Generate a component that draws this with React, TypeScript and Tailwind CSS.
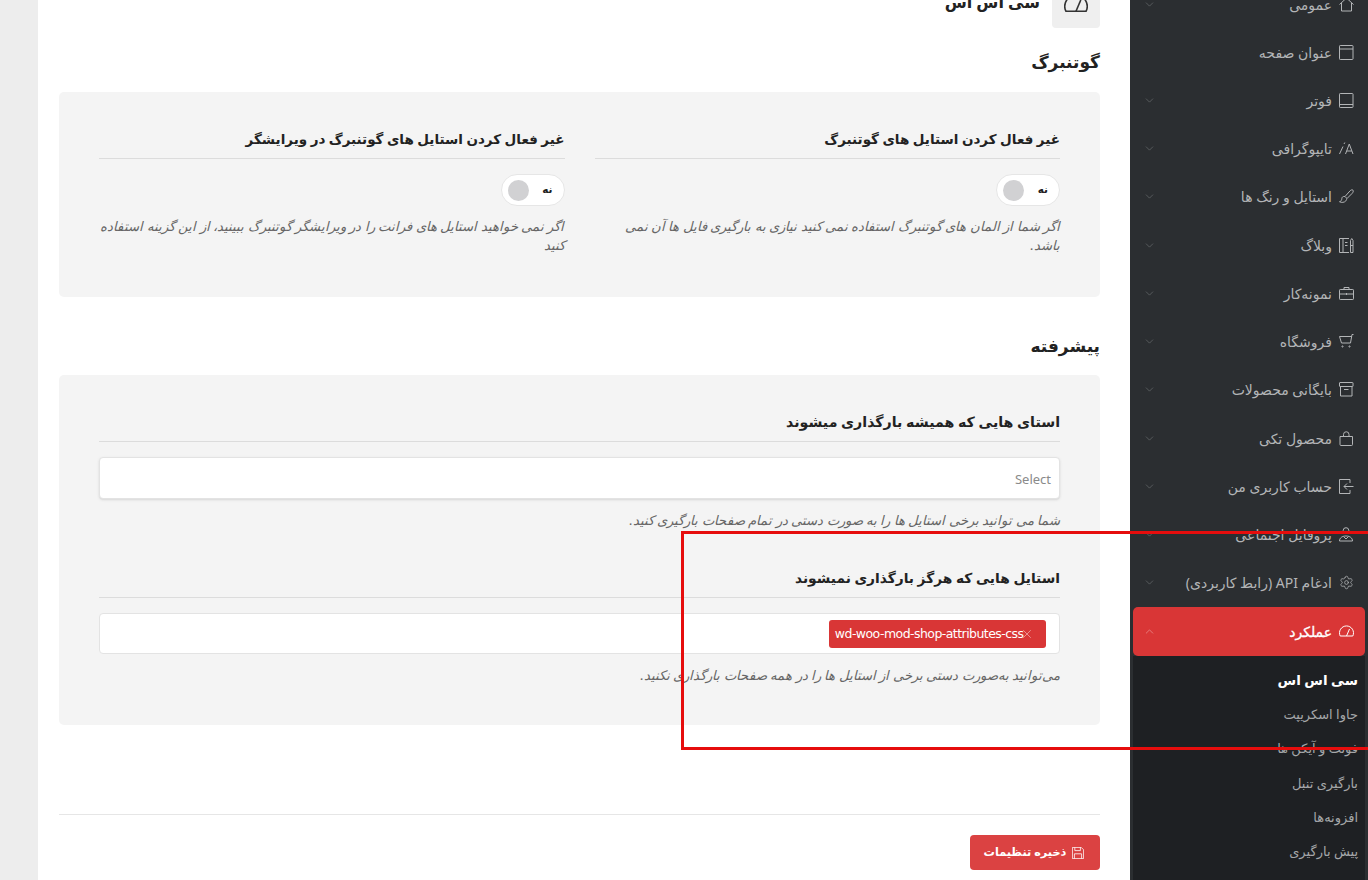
import React from 'react';
import { ChevronDown, ChevronUp, Settings, X } from 'lucide-react';

const Icon: React.FC<{ className?: string; children: React.ReactNode }> = ({ className = 'w-[15px] h-[15px] shrink-0', children }) => (
  <svg viewBox="0 0 15 15" fill="none" stroke="currentColor" strokeWidth="1" className={className}>
    {children}
  </svg>
);

const Gauge: React.FC<{ className?: string }> = ({ className }) => (
  <Icon className={className}>
    <path d="M1.2 12A7 7 0 1 1 13.8 12Z" />
    <path d="M7.5 12 10.5 5" />
  </Icon>
);

const menu = [
  { label: 'عمومی', arrow: true, icon: <Icon><path d="M.5 7.5 7.5 1l7 6.5" /><path d="M2.5 6v8h10V6" /></Icon> },
  { label: 'عنوان صفحه', arrow: false, icon: <Icon><rect x=".5" y=".5" width="13.5" height="14" rx=".7" /><path d="M.5 4h13.5" /></Icon> },
  { label: 'فوتر', arrow: true, icon: <Icon><rect x=".5" y=".5" width="13.5" height="14" rx=".7" /><path d="M.5 11.5h13.5" /></Icon> },
  { label: 'تایپوگرافی', arrow: true, icon: <Icon><path d="M.5 13 4 5.5M5 3l.8-1.5" /><path d="M6.5 13l3.75-10 3.75 10M7.8 10h5" /></Icon> },
  { label: 'استایل و رنگ ها', arrow: true, icon: <Icon><path d="M14 1.2c-1-.8-2-.3-3 .7L6 7.5l2 2 5-5c1-1 1.7-2.3 1-3.300z" /><path d="M6 7.500c-2-.5-3.200.8-3.200 2.200 0 1.500-.8 2.600-2.300 3 2 1.200 5 .8 6.300-.8.9-1.100 1-2 .7-2.400" /></Icon> },
  { label: 'وبلاگ', arrow: true, icon: <Icon><path d="M10 .5H.5v14H10" /><path d="M4 .5v14M6 4.500h2.500M6 7.500h2.500" /><path d="M11.500 5V2.500l1.250-2 1.250 2v12h-2.500z" /><path d="M11.500 7.500H14" /></Icon> },
  { label: 'نمونه‌کار', arrow: true, icon: <Icon><rect x=".5" y="3.500" width="14" height="10" rx=".7" /><path d="M5 3.500v-2h5v2M.5 8h14M7.500 7v2" /></Icon> },
  { label: 'فروشگاه', arrow: true, icon: <Icon><path d="M14.500.5H13l-1.500 8.500H2.500L.5 2.500H12.800" /><circle cx="3.500" cy="12.500" r=".6" /><circle cx="10.500" cy="12.500" r=".6" /></Icon> },
  { label: 'بایگانی محصولات', arrow: true, icon: <Icon><rect x=".5" y=".5" width="13.500" height="4" rx=".5" /><path d="M1.500 4.500v9.500h11.500V4.500M5 7.500h4.500" /></Icon> },
  { label: 'محصول تکی', arrow: true, icon: <Icon><path d="M1 5.500h12.500v8a1 1 0 0 1-1 1H2a1 1 0 0 1-1-1z" /><path d="M4.500 5.500V3.500a2.750 2.750 0 0 1 5.500 0v2" /></Icon> },
  { label: 'حساب کاربری من', arrow: true, icon: <Icon><path d="M11 4V.5H.5v14H11V11" /><path d="M14.500 7.500H5M8 4.500l-3 3 3 3" /></Icon> },
  { label: 'پروفایل اجتماعی', arrow: true, icon: <Icon><circle cx="7" cy="3.500" r="2.800" /><path d="M.5 14c0-3 2.500-5 6.500-5s6.500 2 6.500 5z" /><path d="M4.500 9.500 7 12l2.500-2.500" /></Icon> },
  { label: 'ادغام API (رابط کاربردی)', arrow: true, icon: <Settings strokeWidth={1.2} className="w-[15px] h-[15px] shrink-0" /> },
];

const subMenu = ['جاوا اسکریپت', 'فونت و آیکن ها', 'بارگیری تنبل', 'افزونه‌ها', 'پیش بارگیری'];

const Toggle: React.FC = () => (
  <div className="flex items-center justify-between w-[64px] h-[32px] rounded-full bg-white border border-[#e6e6e6] pr-[11px] pl-[6px]">
    <span className="text-[10.5px] font-bold text-[#222]">نه</span>
    <span className="w-[21px] h-[21px] rounded-full bg-[#d1d1d3]" />
  </div>
);

const FieldTitle: React.FC<{ children: React.ReactNode; size?: string }> = ({ children, size = 'text-[13.5px]' }) => (
  <div className={`h-[27px] border-b border-[#dcdcdc] ${size} font-bold text-[#222] leading-[14px]`}>{children}</div>
);

const Hint: React.FC<{ children: React.ReactNode }> = ({ children }) => (
  <p className="text-[13.2px] italic text-[#666] leading-[19px]">{children}</p>
);

const App: React.FC = () => {
  return (
    <div
      dir="rtl"
      className="relative flex h-[880px] w-[1368px] overflow-hidden bg-white font-['Noto_Sans','DejaVu_Sans',sans-serif]"
    >
      {/* sidebar */}
      <aside className="w-[238px] shrink-0 bg-[#2b2e31] flex flex-col">
        <div className="mt-[-20px] flex flex-col">
          {menu.map((item) => (
            <div key={item.label} className="h-[48.230px] flex items-center gap-[7px] pr-[14px] pl-[13px] text-[#b3b5b7]">
              {item.icon}
              <span className="text-[14px] flex-1 whitespace-nowrap">{item.label}</span>
              {item.arrow && <ChevronDown strokeWidth={1} className="w-[13px] h-[13px] text-[#7b7e81]" />}
            </div>
          ))}
        </div>
        <div className="mx-[3px] h-[49px] shrink-0 rounded-[5px] bg-[#d93636] flex items-center gap-[7px] pr-[11px] pl-[10px] text-white">
          <Gauge className="w-[15px] h-[15px] shrink-0" />
          <span className="text-[14px] flex-1 [-webkit-text-stroke:0.3px_white]">عملکرد</span>
          <ChevronUp strokeWidth={1} className="w-[13px] h-[13px] text-[#f0b3b3]" />
        </div>
        <div className="flex-1 mx-[3px] bg-[#1e2023] pr-[7px] pt-[7px]">
          <div className="h-[35px] flex items-center text-[13.5px] font-bold text-white">سی اس اس</div>
          {subMenu.map((s) => (
            <div key={s} className="h-[34.2px] flex items-center text-[13px] text-[#a5a7a9]">{s}</div>
          ))}
        </div>
      </aside>

      {/* main */}
      <main className="w-[1092px] shrink-0 pr-[30px] pl-[21px] flex flex-col">
        <div className="mt-[-20px] flex items-center gap-[12px] h-[48px]">
          <div className="w-[48px] h-[48px] rounded-[4px] bg-[#efefef] flex items-center justify-center text-[#333]">
            <Gauge className="w-[24px] h-[24px]" />
          </div>
          <h1 className="text-[16px] leading-[20px] pb-[4px] font-bold text-[#222]">سی اس اس</h1>
        </div>

        <h2 className="mt-[22px] h-[24px] text-[17px] leading-[24px] font-bold text-[#222]">گوتنبرگ</h2>

        <section className="mt-[18px] h-[205px] shrink-0 rounded-[5px] bg-[#f4f4f4] p-[40px] grid grid-cols-2 gap-[30px]">
          <div>
            <FieldTitle>غیر فعال کردن استایل های گوتنبرگ</FieldTitle>
            <div className="mt-[15px]"><Toggle /></div>
            <div className="mt-[11px]">
              <Hint>اگر شما از المان های گوتنبرگ استفاده نمی کنید نیازی به بارگیری فایل ها آن نمی باشد.</Hint>
            </div>
          </div>
          <div>
            <FieldTitle>غیر فعال کردن استایل های گوتنبرگ در ویرایشگر</FieldTitle>
            <div className="mt-[15px]"><Toggle /></div>
            <div className="mt-[11px]">
              <Hint>اگر نمی خواهید استایل های فرانت را در ویرایشگر گوتنبرگ ببینید، از این گزینه استفاده کنید</Hint>
            </div>
          </div>
        </section>

        <h2 className="mt-[37px] h-[24px] text-[17px] leading-[24px] font-bold text-[#222]">پیشرفته</h2>

        <section className="mt-[17px] h-[350px] shrink-0 rounded-[5px] bg-[#f4f4f4] p-[40px] flex flex-col">
          <FieldTitle size="text-[14.2px]">استای هایی که همیشه بارگذاری میشوند</FieldTitle>
          <div className="mt-[15px] h-[42px] shrink-0 rounded-[4px] bg-white border border-[#e3e3e3] shadow-sm flex items-center pr-[8px] pt-[3px]">
            <span className="text-[13px] text-[#8a8a8a]" dir="ltr">Select</span>
          </div>
          <div className="mt-[12px]">
            <Hint>شما می توانید برخی استایل ها را به صورت دستی در تمام صفحات بارگیری کنید.</Hint>
          </div>
          <div className="mt-[41px]">
            <FieldTitle size="text-[13.8px]">استایل هایی که هرگز بارگذاری نمیشوند</FieldTitle>
          </div>
          <div className="mt-[15px] h-[41px] shrink-0 rounded-[4px] bg-white border border-[#e3e3e3] flex items-center pr-[13px]">
            <div className="h-[28px] w-[217px] rounded-[3px] bg-[#d93636] flex items-center pr-[12px] text-white">
              <X strokeWidth={1.2} className="w-[14px] h-[14px] text-[#f2b5b5] shrink-0 ml-[-3.5px]" />
              <span className="text-[12.5px] pt-[1px] font-['DejaVu_Sans',sans-serif] tracking-[-0.55px] whitespace-nowrap" dir="ltr">wd-woo-mod-shop-attributes-css</span>
            </div>
          </div>
          <div className="mt-[12px]">
            <Hint>می‌توانید به‌صورت دستی برخی از استایل ها را در همه صفحات بارگذاری نکنید.</Hint>
          </div>
        </section>

        <div className="mt-[89px] border-t border-[#e6e6e6] pt-[20px]">
          <button className="h-[35px] w-[130px] rounded-[4px] bg-[#db4242] text-white flex items-center justify-center gap-[6px] pr-[2px]">
            <Icon className="w-[12px] h-[12px] shrink-0">
              <path d="M.5.5h11l3 3v11H.5z" />
              <path d="M3.500.5v4h7v-4M3 14.500v-6h9v6" />
            </Icon>
            <span className="text-[11.3px] font-bold">ذخیره تنظیمات</span>
          </button>
        </div>
      </main>

      {/* left gutter */}
      <div className="flex-1 bg-[#ededed]" />

      {/* red annotation frame */}
      <div className="absolute left-[681px] top-[531px] w-[720px] h-[219px] border-[3px] border-[#e60d0d] pointer-events-none" />
    </div>
  );
};

export default App;
